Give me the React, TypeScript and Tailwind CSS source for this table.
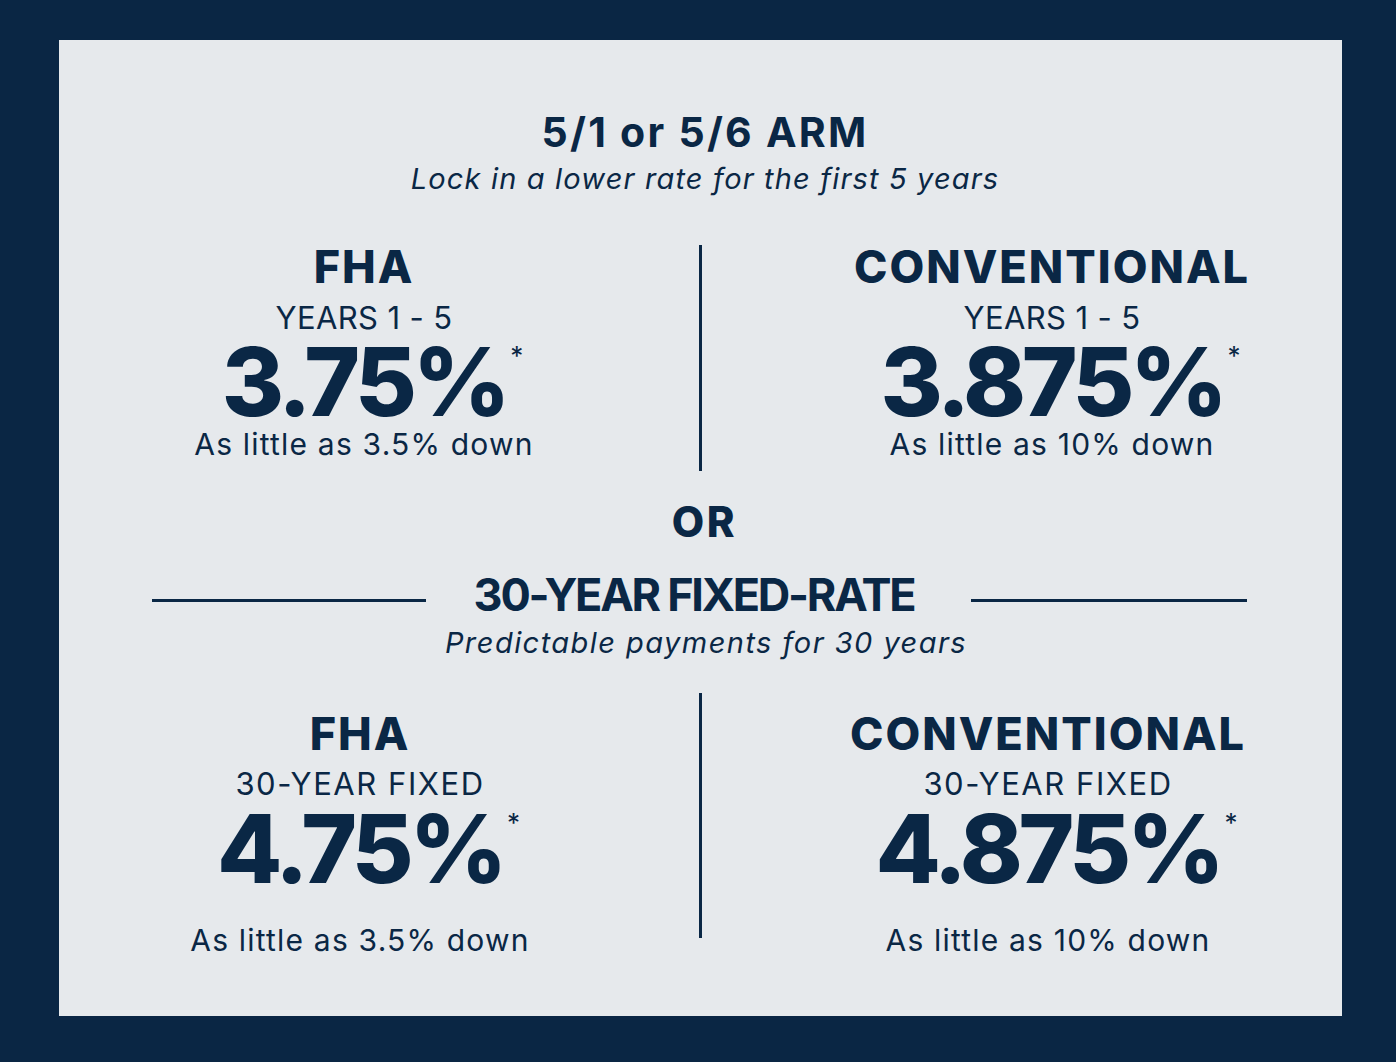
const font = { fontFamily: "Inter, 'Noto Sans', sans-serif" };

type Rate = {
  name: string;
  term: string;
  rate: string;
  down: string;
};

function RateColumn({ item, bottom }: { item: Rate; bottom?: boolean }) {
  return (
    <div className={`w-[480px] flex flex-col items-center text-center ${bottom ? "pt-[18px]" : ""}`}>
      <div className="text-[45px] leading-none font-extrabold tracking-[0.045em]">{item.name}</div>
      <div
        className={`text-[31px] leading-[28px] font-normal ${bottom ? "mt-[14px] tracking-[0.05em]" : "mt-[15px] tracking-[0.012em]"}`}
      >
        {item.term}
      </div>
      <div
        className={`relative text-[95px] leading-[76px] font-extrabold tracking-[-0.045em] ${bottom ? "mt-[13px]" : "mt-[12px]"}`}
      >
        {item.rate}
        <span className="absolute left-full top-[-1px] ml-[4px] text-[26px] leading-none font-normal tracking-normal">
          *
        </span>
      </div>
      <div className={`text-[30px] leading-none font-normal tracking-[0.04em] ${bottom ? "mt-[38px]" : "mt-[9px]"}`}>
        {item.down}
      </div>
    </div>
  );
}

function RateRow({ left, right, bottom }: { left: Rate; right: Rate; bottom?: boolean }) {
  return (
    <div className={`flex ${bottom ? "pl-[61px]" : "pl-[65px]"}`}>
      <RateColumn item={left} bottom={bottom} />
      <div
        className={`w-[3px] bg-[#0a2745] ${bottom ? "ml-[99px] h-[245px]" : "ml-[95px] h-[226px] mt-[1px]"}`}
      />
      <div className={bottom ? "ml-[106px]" : "ml-[110px]"}>
        <RateColumn item={right} bottom={bottom} />
      </div>
    </div>
  );
}

export default function App() {
  const arm: [Rate, Rate] = [
    { name: "FHA", term: "YEARS 1 - 5", rate: "3.75%", down: "As little as 3.5% down" },
    { name: "CONVENTIONAL", term: "YEARS 1 - 5", rate: "3.875%", down: "As little as 10% down" },
  ];
  const fixed: [Rate, Rate] = [
    { name: "FHA", term: "30-YEAR FIXED", rate: "4.75%", down: "As little as 3.5% down" },
    { name: "CONVENTIONAL", term: "30-YEAR FIXED", rate: "4.875%", down: "As little as 10% down" },
  ];

  return (
    <div className="min-h-screen w-full bg-[#0a2644] pt-[40px] pl-[59px] pr-[54px] pb-[46px]" style={font}>
      <div className="h-[976px] bg-[#e6e9ec] text-[#0a2745] pt-[72px]">
        {/* ARM heading */}
        <div className="flex flex-col items-center pl-[9px]">
          <div className="text-[41px] leading-none font-bold tracking-[0.055em]">5/1 or 5/6 ARM</div>
          <div className="mt-[11px] text-[29px] leading-none italic tracking-[0.04em]">
            Lock in a lower rate for the first 5 years
          </div>
        </div>

        <div className="mt-[51px]">
          <RateRow left={arm[0]} right={arm[1]} />
        </div>

        <div className="mt-[30px] flex justify-center pl-[8px]">
          <div className="text-[42px] leading-none font-extrabold tracking-[0.06em]">OR</div>
        </div>

        {/* fixed heading with rules */}
        <div className="mt-[29px] flex items-start pl-[93px] pr-[95px]">
          <div className="w-[274px] h-[3px] mt-[27px] bg-[#0a2745]" />
          <div className="flex-1 text-center text-[45px] leading-none font-bold tracking-[-0.05em] pr-[9px]">
            30-YEAR FIXED-RATE
          </div>
          <div className="w-[276px] h-[3px] mt-[27px] bg-[#0a2745]" />
        </div>
        <div className="mt-[11px] flex justify-center pl-[11px]">
          <div className="text-[29px] leading-none italic tracking-[0.05em]">Predictable payments for 30 years</div>
        </div>

        <div className="mt-[36px]">
          <RateRow left={fixed[0]} right={fixed[1]} bottom />
        </div>
      </div>
    </div>
  );
}
